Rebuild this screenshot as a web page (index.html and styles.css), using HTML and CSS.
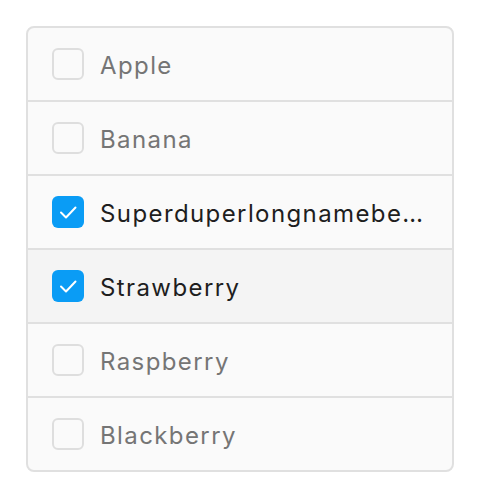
FILE: index.html
```html
<!DOCTYPE html>
<html>
<head>
<meta charset="utf-8">
<link rel="stylesheet" href="styles.css">
</head>
<body>
<div class="list">
  <div class="row"><span class="box"></span><span class="label">Apple</span></div>
  <div class="row"><span class="box"></span><span class="label">Banana</span></div>
  <div class="row checked"><span class="box"><svg viewBox="0 0 32 32" width="32" height="32"><path d="M9 16.5l5 5 9.5-10" fill="none" stroke="#fff" stroke-width="2" stroke-linecap="round" stroke-linejoin="round"/></svg></span><span class="label">Superduperlongnamebe…</span></div>
  <div class="row checked hover"><span class="box"><svg viewBox="0 0 32 32" width="32" height="32"><path d="M9 16.5l5 5 9.5-10" fill="none" stroke="#fff" stroke-width="2" stroke-linecap="round" stroke-linejoin="round"/></svg></span><span class="label">Strawberry</span></div>
  <div class="row"><span class="box"></span><span class="label">Raspberry</span></div>
  <div class="row"><span class="box"></span><span class="label">Blackberry</span></div>
</div>
</body>
</html>
```
FILE: styles.css
```css
html, body { margin: 0; padding: 0; background: #fff; }
body { padding: 26px; font-family: Inter, "Noto Sans", sans-serif; }
.list {
  width: 424px;
  border: 2px solid #e0e0e0;
  border-radius: 8px;
  background: #fafafa;
  overflow: hidden;
}
.row {
  height: 72px;
  display: flex;
  align-items: center;
  padding: 0 24px;
  gap: 16px;
  border-top: 2px solid #e0e0e0;
}
.row:first-child { border-top: none; }
.row.hover { background: #f4f4f4; }
.box {
  flex: none;
  width: 32px;
  height: 32px;
  box-sizing: border-box;
  border: 2px solid #dedede;
  border-radius: 6px;
  background: #fafafa;
  display: flex;
  align-items: center;
  justify-content: center;
}
.checked .box { background: #0a9cf5; border: none; }
.box svg { display: block; }
.label {
  font-size: 24px;
  color: #757575;
  white-space: nowrap;
  min-width: 0;
  letter-spacing: 1.4px;
  padding-top: 2px;
}
.checked .label { color: #1e1e1e; }
```
